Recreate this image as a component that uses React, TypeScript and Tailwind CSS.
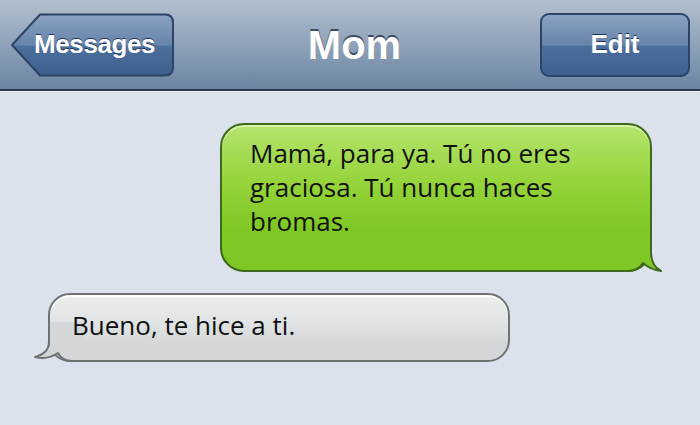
export default function App() {
  return (
    <div className="flex h-[425px] w-[700px] flex-col overflow-hidden bg-[#dbe2eb] font-['Liberation_Sans',Arial,sans-serif]">
      {/* top bar */}
      <header className="flex h-[91px] shrink-0 items-center justify-between border-b-2 border-[#2b3a4e] bg-gradient-to-b from-[#b3c0cf] via-[#8fa2b9] to-[#6b85a2] px-[10px]">
        <div className="relative flex h-[64px] w-[165px] items-center">
          <svg className="absolute inset-0" width="165" height="64" viewBox="0 0 165 64">
            <defs>
              <linearGradient id="back" x1="0" y1="0" x2="0" y2="1">
                <stop offset="0" stopColor="#8aa2c0" />
                <stop offset="0.5" stopColor="#6784ab" />
                <stop offset="0.52" stopColor="#4d6f9c" />
                <stop offset="1" stopColor="#3d6090" />
              </linearGradient>
            </defs>
            <path
              d="M 2 32 L 30 1.5 L 155 1.5 Q 163 1.5 163 9.5 L 163 54.5 Q 163 62.5 155 62.5 L 30 62.5 Z"
              fill="url(#back)"
              stroke="#2c4467"
              strokeWidth="2"
              strokeLinejoin="round"
            />
          </svg>
          <span className="relative pl-[24px] text-[26px] font-bold tracking-[-0.4px] text-white [text-shadow:0_-1px_0_#1f3556]">
            Messages
          </span>
        </div>
        <h1 className="pr-[6px] text-[40px] font-bold text-white [text-shadow:0_-2px_0_#3b4a5e]">Mom</h1>
        <div className="flex h-[64px] w-[150px] items-center justify-center rounded-[9px] border-2 border-[#2c4467] bg-[linear-gradient(to_bottom,#8aa2c0_0%,#6784ab_50%,#4d6f9c_52%,#3d6090_100%)] text-[26px] font-bold text-white [text-shadow:0_-1px_0_#1f3556]">
          Edit
        </div>
      </header>
      <div className="h-px bg-[#eef2f6]" />

      {/* messages */}
      <main className="flex flex-col gap-[21px] pt-[31px] font-['Open_Sans','Noto_Sans',sans-serif] text-[26px] text-[#111]">
        <div className="flex justify-end pr-[48px]">
          <div className="relative h-[149px] w-[432px] rounded-[24px] border-2 border-[#3d6a1f] bg-[linear-gradient(to_bottom,#b5e46e_0%,#95d43a_40%,#7ec725_72%,#7ec725_100%)] px-[28px] pt-[11px] leading-[34px] shadow-[inset_0_2px_0_#d6f3a8]">
            <svg className="absolute right-[-12px] bottom-[-2px]" width="50" height="40" viewBox="0 0 50 40">
              <path d="M 38 0 L 38 20 Q 38 34 48 38 Q 39 37 31 30 Q 26 38 16 38 L 0 38 L 0 0 Z" fill="#7ec725" />
              <path
                d="M 39 0 L 39 20 Q 39 34 49 39 Q 39 38 31 31 Q 26 39 16 39 L 0 39"
                fill="none"
                stroke="#3d6a1f"
                strokeWidth="2"
                strokeLinejoin="round"
              />
            </svg>
            <p className="relative pr-[10px]">Mamá, para ya. Tú no eres graciosa. Tú nunca haces bromas.</p>
          </div>
        </div>
        <div className="flex justify-start pl-[48px]">
          <div className="relative flex h-[69px] w-[462px] items-center rounded-[22px] border-2 border-[#6f7272] bg-[linear-gradient(to_bottom,#eceeee_0%,#e0e3e3_45%,#d3d7d7_75%,#d3d7d7_100%)] px-[22px] pb-[5px] shadow-[inset_0_2px_0_#ffffff]">
            <svg className="absolute left-[-16px] bottom-[-2px]" width="50" height="40" viewBox="0 0 50 40">
              <path d="M 16 0 L 16 20 Q 16 31 2 35 Q 14 37 24 30 Q 28 38 38 38 L 50 38 L 50 0 Z" fill="#d3d7d7" />
              <path
                d="M 15 0 L 15 20 Q 15 31 1 35 Q 14 38 24 31 Q 28 39 38 39 L 50 39"
                fill="none"
                stroke="#6f7272"
                strokeWidth="2"
                strokeLinejoin="round"
              />
            </svg>
            <p className="relative leading-[40px]">Bueno, te hice a ti.</p>
          </div>
        </div>
      </main>
    </div>
  );
}
